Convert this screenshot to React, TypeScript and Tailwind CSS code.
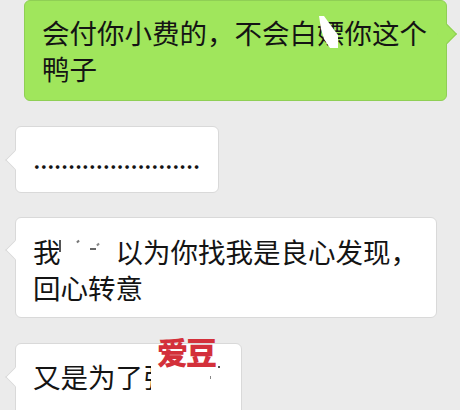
import React from "react";

const font = { fontFamily: '"Noto Sans CJK SC", "Noto Sans", sans-serif' };

function LeftTail({ top }: { top: string }) {
  return (
    <span
      className={`absolute left-[-8px] ${top} h-[14px] w-[14px] rotate-45 border-b border-l border-[#d9d9d9] bg-white`}
    />
  );
}

export default function App() {
  return (
    <div
      className="flex h-[410px] w-[460px] flex-col overflow-hidden bg-[#ebebeb] text-[27.5px] leading-[35.5px] text-[#141414]"
      style={font}
    >
      {/* green outgoing bubble */}
      <div className="relative ml-[24px] w-[423px] shrink-0 rounded-[6px] border border-[#8fcf55] bg-[#a0e65c] pb-[14px] pl-[17px] pt-[14px]">
        <span className="absolute right-[-8px] top-[26px] h-[14px] w-[14px] rotate-45 border-r border-t border-[#8fcf55] bg-[#a0e65c]" />
        <p className="relative">
          会付你小费的，不会白嫖你这个
          <br />
          鸭子
        </p>
        <svg
          className="absolute left-[293px] top-[14px]"
          width="22"
          height="34"
          viewBox="0 0 22 34"
        >
          <path d="M1 1 L6 1 L14 12 L20 20 L20 33 L12 33 L6 24 L3 14 Z" fill="#ffffff" />
        </svg>
      </div>

      {/* dots bubble */}
      <div className="relative ml-[15px] mt-[25px] h-[67px] w-[204px] shrink-0 rounded-[6px] border border-[#d9d9d9] bg-white pl-[17px] pt-[13px]">
        <LeftTail top="top-[26px]" />
        <p className="relative tracking-[-0.7px]">........................</p>
      </div>

      {/* long bubble */}
      <div className="relative ml-[15px] mt-[24px] w-[422px] shrink-0 rounded-[6px] border border-[#d9d9d9] bg-white pb-[12px] pl-[17px] pt-[16px]">
        <LeftTail top="top-[25px]" />
        <p className="relative">
          我<span className="text-transparent">还是</span>以为你找我是良心发现，
          <br />
          回心转意
        </p>
        <span className="absolute left-[43px] top-[22px] h-[12px] w-[2px] bg-[#555]" />
        <span className="absolute left-[61px] top-[22px] h-[3px] w-[2px] rotate-45 bg-[#777]" />
        <span className="absolute left-[74px] top-[30px] h-[2px] w-[6px] bg-[#666]" />
        <span className="absolute left-[81px] top-[25px] h-[3px] w-[2px] rotate-45 bg-[#888]" />
      </div>

      {/* last bubble */}
      <div className="relative ml-[15px] mt-[25px] w-[227px] shrink-0 rounded-[6px] border border-[#d9d9d9] bg-white pb-[30px] pl-[17px] pt-[15px]">
        <LeftTail top="top-[26px]" />
        <p className="relative">
          又是为了
          <span className="inline-block h-[35.5px] w-[8px] overflow-hidden align-top">张</span>
          <span className="text-transparent">艺兴</span>
        </p>
        <span
          className="absolute left-[141px] top-[-9px] text-[31px] font-black leading-[31px] tracking-[-2px] text-[#d3303a]"
          style={font}
        >
          爱豆
        </span>
        <span className="absolute left-[202px] top-[22px] h-[2px] w-[2px] bg-[#555]" />
        <span className="absolute left-[194px] top-[32px] h-[3px] w-[1px] bg-[#888]" />
      </div>
    </div>
  );
}
